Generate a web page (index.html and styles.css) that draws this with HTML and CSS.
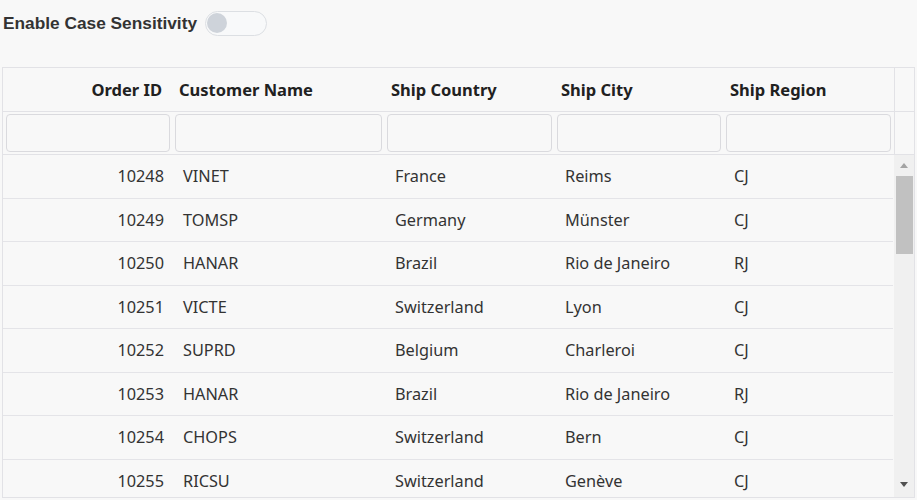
FILE: index.html
```html
<!DOCTYPE html>
<html>
<head>
<meta charset="utf-8">
<link rel="stylesheet" href="styles.css">
</head>
<body>
<div class="toolbar">
  <span class="toolbar-label">Enable Case Sensitivity</span>
  <span class="switch"><span class="knob"></span></span>
</div>
<div class="grid">
  <div class="grid-head">
    <div class="row head-row">
      <div class="cell c1 right">Order ID</div>
      <div class="cell c2">Customer Name</div>
      <div class="cell c3">Ship Country</div>
      <div class="cell c4">Ship City</div>
      <div class="cell c5">Ship Region</div>
      <div class="spacer"></div>
    </div>
    <div class="row filter-row">
      <div class="fcell c1"><div class="input"></div></div>
      <div class="fcell c2"><div class="input"></div></div>
      <div class="fcell c3"><div class="input"></div></div>
      <div class="fcell c4"><div class="input"></div></div>
      <div class="fcell c5"><div class="input"></div></div>
      <div class="spacer"></div>
    </div>
  </div>
  <div class="grid-body">
    <div class="rows">
      <div class="row data-row"><div class="cell c1 right">10248</div><div class="cell c2">VINET</div><div class="cell c3">France</div><div class="cell c4">Reims</div><div class="cell c5">CJ</div></div>
      <div class="row data-row"><div class="cell c1 right">10249</div><div class="cell c2">TOMSP</div><div class="cell c3">Germany</div><div class="cell c4">Münster</div><div class="cell c5">CJ</div></div>
      <div class="row data-row"><div class="cell c1 right">10250</div><div class="cell c2">HANAR</div><div class="cell c3">Brazil</div><div class="cell c4">Rio de Janeiro</div><div class="cell c5">RJ</div></div>
      <div class="row data-row"><div class="cell c1 right">10251</div><div class="cell c2">VICTE</div><div class="cell c3">Switzerland</div><div class="cell c4">Lyon</div><div class="cell c5">CJ</div></div>
      <div class="row data-row"><div class="cell c1 right">10252</div><div class="cell c2">SUPRD</div><div class="cell c3">Belgium</div><div class="cell c4">Charleroi</div><div class="cell c5">CJ</div></div>
      <div class="row data-row"><div class="cell c1 right">10253</div><div class="cell c2">HANAR</div><div class="cell c3">Brazil</div><div class="cell c4">Rio de Janeiro</div><div class="cell c5">RJ</div></div>
      <div class="row data-row"><div class="cell c1 right">10254</div><div class="cell c2">CHOPS</div><div class="cell c3">Switzerland</div><div class="cell c4">Bern</div><div class="cell c5">CJ</div></div>
      <div class="row data-row"><div class="cell c1 right">10255</div><div class="cell c2">RICSU</div><div class="cell c3">Switzerland</div><div class="cell c4">Genève</div><div class="cell c5">CJ</div></div>
    </div>
    <div class="scrollbar">
      <div class="arrow up"></div>
      <div class="track"><div class="thumb"></div></div>
      <div class="arrow down"></div>
    </div>
  </div>
</div>
</body>
</html>
```
FILE: styles.css
```css
* { box-sizing: border-box; }
html, body { margin: 0; padding: 0; background: #f8f8f8; }
body { font-family: "Noto Sans", "Open Sans", sans-serif; color: #333; }

.toolbar {
  display: flex;
  align-items: center;
  height: 46px;
  padding-left: 3px;
}
.toolbar-label {
  font-family: "Liberation Sans", Arial, sans-serif;
  font-weight: bold;
  font-size: 17.3px;
  color: #333;
}
.switch {
  margin-left: 8px;
  width: 62px;
  height: 25px;
  border: 1px solid #dcdfe3;
  border-radius: 13px;
  background: #f8f9fa;
  display: flex;
  align-items: center;
  padding-left: 1px;
}
.knob {
  width: 20px;
  height: 20px;
  border-radius: 50%;
  background: #ced3da;
}

.grid {
  margin: 21px 0 0 2px;
  width: 913px;
  height: 431px;
  border: 1px solid #e2e2e6;
  display: flex;
  flex-direction: column;
  overflow: hidden;
}
.row { display: flex; }
.head-row {
  height: 44px;
  border-bottom: 1px solid #e2e2e6;
  align-items: center;
  font-weight: 700;
  font-size: 16.5px;
  color: #212121;
}
.spacer {
  width: 20px;
  align-self: stretch;
  border-left: 1px solid #e2e2e6;
  margin-left: auto;
}
.c1 { width: 169px; }
.c2 { width: 212px; }
.c3 { width: 170px; }
.c4 { width: 169px; }
.c5 { width: 170px; }
.cell { padding: 0 7px; white-space: nowrap; }
.head-row .c1 { padding-right: 10px; }
.right { text-align: right; }

.filter-row {
  height: 43px;
  border-bottom: 1px solid #e2e2e6;
  align-items: center;
}
.fcell { padding: 0 2px 0 3px; height: 100%; display: flex; align-items: center; }
.input {
  width: 100%;
  height: 38px;
  border: 1px solid #dadade;
  border-radius: 4px;
  background: #f8f8f8;
}

.grid-body {
  flex: 1;
  display: flex;
  min-height: 0;
}
.rows { width: 890px; }
.data-row {
  height: 43.5px;
  border-bottom: 1px solid #e4e4e8;
  align-items: center;
  font-size: 16.3px;
  color: #333;
}
.data-row .cell { padding: 0 10px 0 11px; }
.data-row .c1 { padding-right: 8px; }

.scrollbar {
  width: 21px;
  margin-left: 1px;
  background: #f0f0f0;
  display: flex;
  flex-direction: column;
  align-items: center;
}
.arrow { width: 0; height: 0; border-left: 4px solid transparent; border-right: 4px solid transparent; }
.arrow.up { border-bottom: 5px solid #a3a3a3; margin: 8px 0 8px; }
.arrow.down { border-top: 5px solid #505050; margin: 8px 0 10px; }
.track { flex: 1; width: 17px; }
.thumb { width: 17px; height: 78px; background: #c1c1c1; }
```
